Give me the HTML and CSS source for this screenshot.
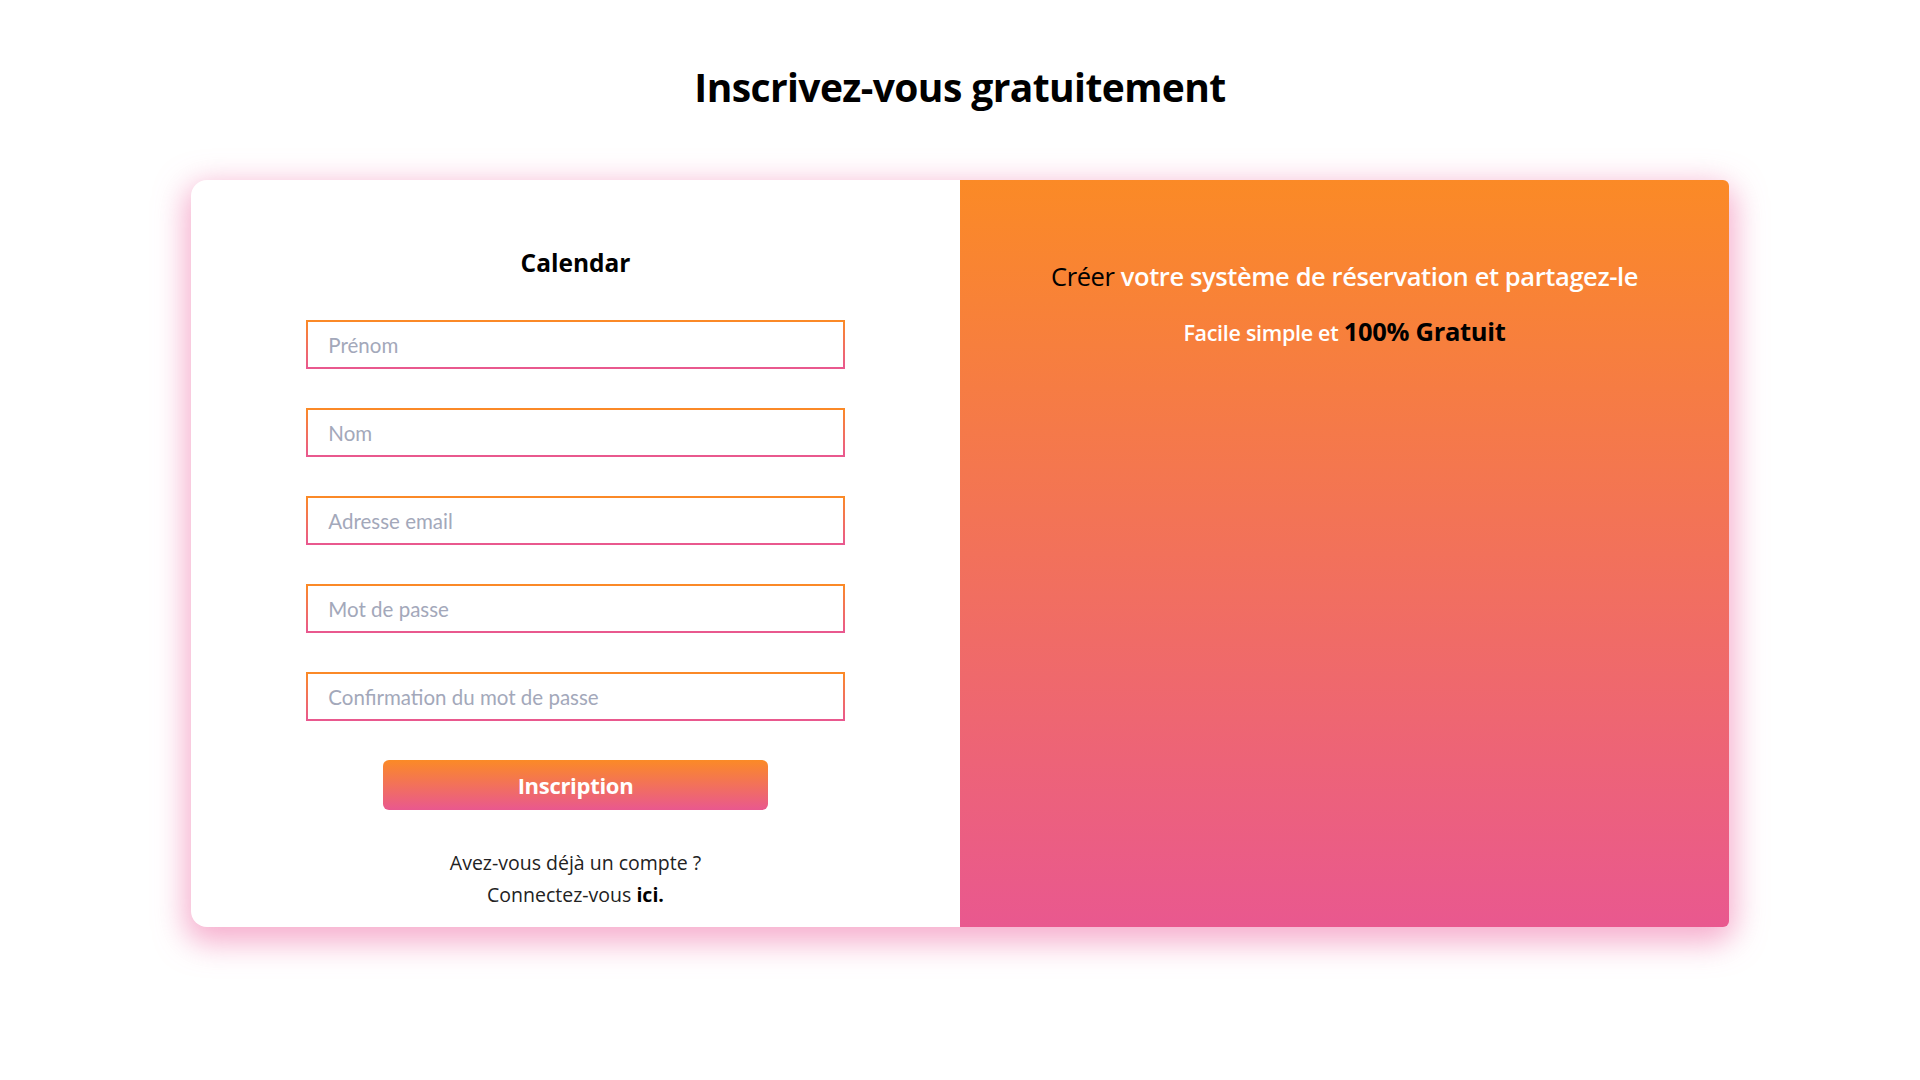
FILE: index.html
```html
<!DOCTYPE html>
<html lang="fr">
<head>
<meta charset="utf-8">
<title>Inscription</title>
<link rel="stylesheet" href="styles.css">
</head>
<body>
<div class="page">
<h1 class="page-title">Inscrivez-vous gratuitement</h1>
<main class="card">
  <section class="form-panel">
    <h2 class="brand">Calendar</h2>
    <form class="signup-form">
      <input class="field" type="text" placeholder="Prénom">
      <input class="field" type="text" placeholder="Nom">
      <input class="field" type="email" placeholder="Adresse email">
      <input class="field" type="password" placeholder="Mot de passe">
      <input class="field" type="password" placeholder="Confirmation du mot de passe">
      <button class="submit" type="button">Inscription</button>
    </form>
    <p class="login-note">Avez-vous déjà un compte ?<br>Connectez-vous <a class="login-link" href="#">ici.</a></p>
  </section>
  <section class="promo-panel">
    <p class="promo-line"><span class="dark">Créer</span> votre système de réservation et partagez-le</p>
    <p class="promo-sub">Facile simple et <span class="free">100% Gratuit</span></p>
  </section>
</main>
</div>
</body>
</html>
```
FILE: styles.css
```css
* { box-sizing: border-box; }

html, body {
  margin: 0;
  padding: 0;
  background: #ffffff;
}

body {
  font-family: "Open Sans", "Noto Sans", sans-serif;
  color: #111;
}

.page {
  min-height: 1080px;
  padding: 63px 0 100px;
}

.page-title {
  margin: 0 0 69px;
  text-align: center;
  font-size: 39px;
  line-height: 48px;
  font-weight: 700;
  letter-spacing: -0.6px;
  color: #000;
}

.card {
  width: 1538px;
  margin: 0 auto;
  display: grid;
  grid-template-columns: 1fr 1fr;
  border-radius: 16px;
  background: #fff;
  box-shadow: 0 10px 30px 6px rgba(238, 110, 165, 0.55);
}

.form-panel {
  padding: 67px 0 16px;
  display: flex;
  flex-direction: column;
  align-items: center;
}

.brand {
  margin: 0 0 41px;
  font-size: 24.5px;
  line-height: 32px;
  font-weight: 700;
  color: #000;
}

.signup-form {
  width: 70%;
  display: flex;
  flex-direction: column;
  align-items: center;
  gap: 39px;
}

.field {
  width: 100%;
  height: 49px;
  padding: 0 20px;
  border: 2px solid;
  border-image: linear-gradient(180deg, #fb8a26, #e9588f) 1;
  font-family: Lato, "Open Sans", sans-serif;
  font-size: 20.5px;
  color: #333;
  outline: none;
  background: #fff;
}

.field::placeholder {
  color: #a3a8ba;
}

.submit {
  width: 71.4%;
  height: 50px;
  border: 0;
  border-radius: 6px;
  background: linear-gradient(180deg, #fb8a26, #e9588f);
  color: #fff;
  font-family: "Open Sans", sans-serif;
  font-size: 22px;
  font-weight: 700;
  letter-spacing: -0.3px;
  cursor: pointer;
}

.login-note {
  margin: 37px 0 0;
  text-align: center;
  font-size: 19.5px;
  line-height: 32px;
  color: #222;
}

.login-link {
  color: #000;
  font-weight: 700;
  text-decoration: none;
}

.promo-panel {
  background: linear-gradient(180deg, #fb8a26 0%, #e9588f 100%);
  border-radius: 0 6px 6px 0;
  padding-top: 76px;
  text-align: center;
  color: #fff;
}

.promo-line {
  margin: 0;
  font-size: 25.5px;
  line-height: 40px;
  font-weight: 600;
  letter-spacing: -0.4px;
}

.promo-sub {
  margin: 15px 0 0;
  font-size: 21.5px;
  line-height: 40px;
  font-weight: 600;
  letter-spacing: -0.3px;
}

.dark {
  color: #000;
  font-weight: 500;
}

.free {
  color: #000;
  font-size: 25.5px;
  font-weight: 700;
}
```
